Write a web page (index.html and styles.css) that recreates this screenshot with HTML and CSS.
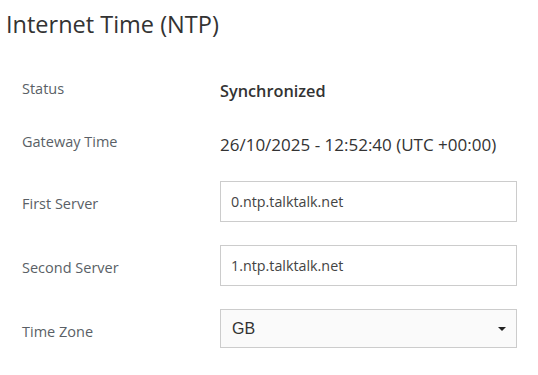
FILE: index.html
```html
<!DOCTYPE html>
<html>
<head>
<meta charset="utf-8">
<link rel="stylesheet" href="styles.css">
</head>
<body>
<div class="page">
  <h1 class="title">Internet Time (NTP)</h1>
  <div class="form">
    <div class="row row-status">
      <div class="label">Status</div>
      <div class="value value-strong">Synchronized</div>
    </div>
    <div class="row row-time">
      <div class="label">Gateway Time</div>
      <div class="value">26/10/2025 - 12:52:40 (UTC +00:00)</div>
    </div>
    <div class="row row-field">
      <div class="label">First Server</div>
      <div class="field">0.ntp.talktalk.net</div>
    </div>
    <div class="row row-field">
      <div class="label">Second Server</div>
      <div class="field">1.ntp.talktalk.net</div>
    </div>
    <div class="row row-field">
      <div class="label">Time Zone</div>
      <div class="select"><span>GB</span><span class="caret"></span></div>
    </div>
  </div>
</div>
</body>
</html>
```

FILE: styles.css
```css
html, body {
  margin: 0;
  padding: 0;
  background: #fff;
}
.page {
  font-family: "Open Sans", sans-serif;
  color: #333;
}
.title {
  margin: 0;
  padding: 9px 0 0 6px;
  font-size: 23.5px;
  font-weight: 400;
  line-height: 30px;
  color: #333;
}
.form {
  padding: 0 21px 0 22px;
  display: flex;
  flex-direction: column;
}
.row {
  display: grid;
  grid-template-columns: 198px 1fr;
  align-items: center;
}
.row-status { margin-top: 41px; height: 22px; }
.row-time { margin-top: 31px; height: 22px; }
.row-field { margin-top: 26px; height: 41px; }
.row-field + .row-field { margin-top: 23px; }
.label {
  font-size: 14.5px;
  color: #5a5f66;
}
.row-field .label { margin-top: 4px; }
.row-status .label { margin-top: -6px; }
.row-time .label { margin-top: -6px; }
.value {
  font-size: 17px;
  color: #333;
}
.value-strong {
  font-size: 16.3px;
  font-weight: 600;
}
.field {
  box-sizing: border-box;
  height: 41px;
  border: 1px solid #ccc;
  padding: 0 10px;
  display: flex;
  align-items: center;
  font-size: 14.3px;
  color: #444;
}
.select {
  align-self: start;
  box-sizing: border-box;
  height: 39px;
  border: 1px solid #ccc;
  background: #fafafa;
  padding: 0 10px 0 11px;
  display: flex;
  align-items: center;
  justify-content: space-between;
  font-family: "Liberation Sans", Arial, sans-serif;
  font-size: 16px;
  color: #333;
}
.caret {
  width: 0;
  height: 0;
  border-left: 4px solid transparent;
  border-right: 4px solid transparent;
  border-top: 4px solid #222;
}
```
